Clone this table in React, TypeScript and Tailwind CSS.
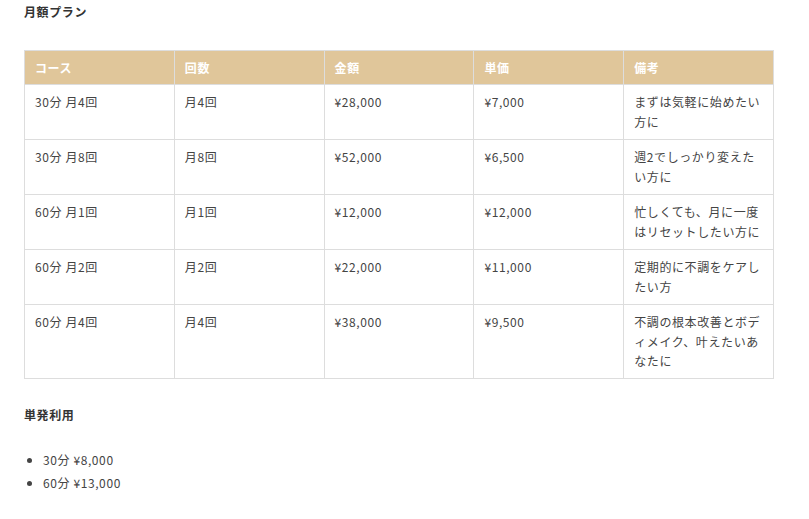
const rows = [
  { course: "30分 月4回", count: "月4回", price: "¥28,000", unit: "¥7,000", note: "まずは気軽に始めたい方に" },
  { course: "30分 月8回", count: "月8回", price: "¥52,000", unit: "¥6,500", note: "週2でしっかり変えたい方に" },
  { course: "60分 月1回", count: "月1回", price: "¥12,000", unit: "¥12,000", note: "忙しくても、月に一度はリセットしたい方に" },
  { course: "60分 月2回", count: "月2回", price: "¥22,000", unit: "¥11,000", note: "定期的に不調をケアしたい方" },
  { course: "60分 月4回", count: "月4回", price: "¥38,000", unit: "¥9,500", note: "不調の根本改善とボディメイク、叶えたいあなたに" },
];

const headers = ["コース", "回数", "金額", "単価", "備考"];

export default function App() {
  return (
    <div
      className="min-h-screen bg-white px-[24px] pt-[2px] text-[12px] leading-[19.5px] tracking-[0.05em] text-[#444]"
      style={{ fontFamily: '"Noto Sans CJK JP", "Noto Sans", sans-serif' }}
    >
      <h3 className="font-bold leading-[20px] text-[#333]">月額プラン</h3>

      <table className="mt-[28px] w-[750px] table-fixed border-collapse">
        <thead>
          <tr className="bg-[#e0c69a]">
            {headers.map((h) => (
              <th
                key={h}
                className="border border-[#dddddd] px-[10px] py-[6.5px] text-left font-bold text-white"
              >
                {h}
              </th>
            ))}
          </tr>
        </thead>
        <tbody>
          {rows.map((r) => (
            <tr key={r.course}>
              {[r.course, r.count, r.price, r.unit, r.note].map((c, i) => (
                <td
                  key={i}
                  className="border border-[#dddddd] px-[10px] py-[7.5px] align-top"
                >
                  {c}
                </td>
              ))}
            </tr>
          ))}
        </tbody>
      </table>

      <h3 className="mt-[26px] font-bold leading-[20px] text-[#333]">単発利用</h3>

      <ul className="mt-[23px] list-disc pl-[19px] leading-[23px]">
        <li>30分 ¥8,000</li>
        <li>60分 ¥13,000</li>
      </ul>
    </div>
  );
}
